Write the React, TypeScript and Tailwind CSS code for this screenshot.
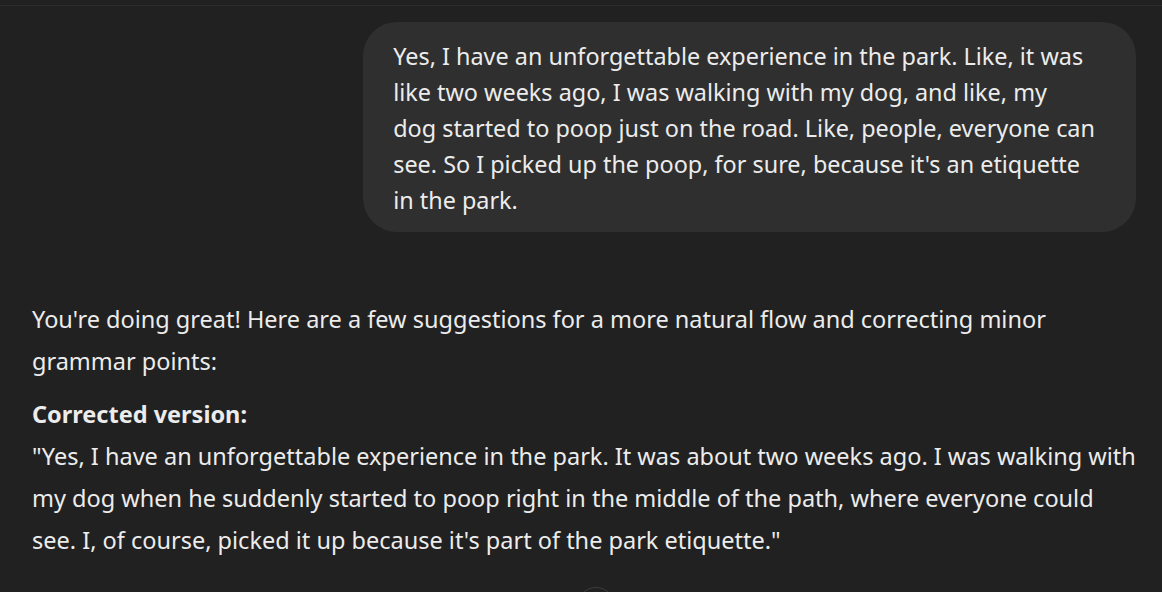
export default function App() {
  return (
    <div
      className="h-[592px] w-[1162px] overflow-hidden bg-[#212121] text-[#ececec]"
      style={{ fontFamily: '"Noto Sans", "Open Sans", sans-serif' }}
    >
      <div className="h-[6px] border-b border-[#2c2c2c]" />
      <div className="flex flex-col pl-[32px] pr-[26px] pt-[16px]">
        {/* user turn */}
        <div className="flex justify-end">
          <div className="w-[70%] rounded-[34px] bg-[#2f2f2f] px-[30px] pt-[16px] pb-[14px] text-[23.4px] leading-[36px] whitespace-nowrap">
            Yes, I have an unforgettable experience in the park. Like, it was
            <br />
            like two weeks ago, I was walking with my dog, and like, my
            <br />
            dog started to poop just on the road. Like, people, everyone can
            <br />
            see. So I picked up the poop, for sure, because it's an etiquette
            <br />
            in the park.
          </div>
        </div>

        {/* assistant turn */}
        <div className="mt-[67px] text-[23.5px] leading-[42px] whitespace-nowrap">
          <p className="-mt-[1px]">
            You're doing great! Here are a few suggestions for a more natural flow and correcting minor
            <br />
            grammar points:
          </p>
          <p className="mt-[11px]">
            <strong className="font-bold">Corrected version:</strong>
            <br />
            "Yes, I have an unforgettable experience in the park. It was about two weeks ago. I was walking with
            <br />
            my dog when he suddenly started to poop right in the middle of the path, where everyone could
            <br />
            see. I, of course, picked it up because it's part of the park etiquette."
          </p>
        </div>
      </div>

      <div className="relative">
        <div className="absolute left-[577px] top-[26px] h-[38px] w-[38px] rounded-full border border-[#3d3d3d] bg-[#212121]" />
      </div>
    </div>
  );
}
